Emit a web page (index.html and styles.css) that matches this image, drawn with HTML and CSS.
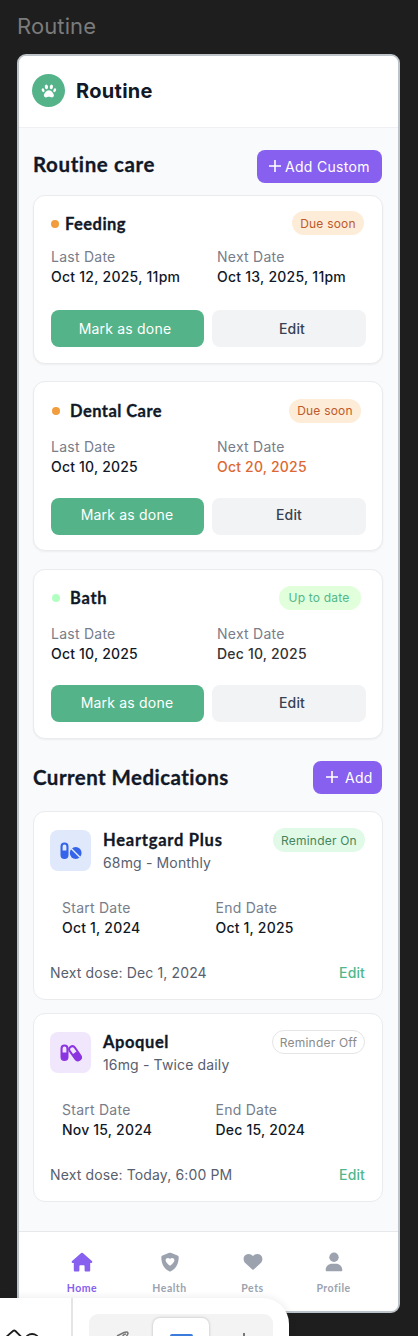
FILE: index.html
```html
<!DOCTYPE html>
<html lang="en">
<head>
<meta charset="utf-8">
<title>Routine</title>
<link rel="stylesheet" href="styles.css">
</head>
<body>
<div class="canvas">
  <div class="frame-name"><span>Routine</span></div>
  <main class="frame">
    <header class="topbar">
      <span class="logo">
        <svg width="16" height="14" viewBox="0 0 16 14" fill="#fff"><ellipse cx="5.4" cy="2.9" rx="1.6" ry="2.3" transform="rotate(-12 5.4 2.9)"/><ellipse cx="10.4" cy="2.9" rx="1.6" ry="2.3" transform="rotate(12 10.4 2.9)"/><ellipse cx="2.1" cy="6.3" rx="1.3" ry="2" transform="rotate(-25 2.1 6.3)"/><ellipse cx="13.7" cy="6.3" rx="1.3" ry="2" transform="rotate(25 13.7 6.3)"/><path d="M7.9 6.2C5.2 6.2 2.9 9.6 2.9 11.6c0 1.2.9 1.8 2 1.8 1.200 0 1.800-.6 3-.6s1.800.6 3 .6c1.100 0 2-.6 2-1.800 0-2-2.300-5.400-5-5.400Z"/></svg>
      </span>
      <h1>Routine</h1>
    </header>

    <div class="section-head care-head">
      <h2 class="t-care">Routine care</h2>
      <button class="add add-custom"><svg width="12" height="12" viewBox="0 0 12 12"><path d="M6 .5v11M.5 6h11" stroke="#fff" stroke-width="1.600" stroke-linecap="round"/></svg><span>Add Custom</span></button>
    </div>

    <section class="card feeding">
      <div class="card-head"><i class="dot"></i><h3>Feeding</h3><span class="pill soon">Due soon</span></div>
      <div class="dates"><dl><dt>Last Date</dt><dd>Oct 12, 2025, 11pm</dd></dl><dl><dt>Next Date</dt><dd>Oct 13, 2025, 11pm</dd></dl></div>
      <div class="actions"><button class="done">Mark as done</button><button class="edit">Edit</button></div>
    </section>

    <section class="card dental">
      <div class="card-head"><i class="dot"></i><h3>Dental Care</h3><span class="pill soon">Due soon</span></div>
      <div class="dates"><dl><dt>Last Date</dt><dd>Oct 10, 2025</dd></dl><dl><dt>Next Date</dt><dd class="due">Oct 20, 2025</dd></dl></div>
      <div class="actions"><button class="done">Mark as done</button><button class="edit">Edit</button></div>
    </section>

    <section class="card bath">
      <div class="card-head"><i class="dot ok"></i><h3>Bath</h3><span class="pill uptodate">Up to date</span></div>
      <div class="dates"><dl><dt>Last Date</dt><dd>Oct 10, 2025</dd></dl><dl><dt>Next Date</dt><dd class="later">Dec 10, 2025</dd></dl></div>
      <div class="actions"><button class="done">Mark as done</button><button class="edit">Edit</button></div>
    </section>

    <div class="section-head med-head">
      <h2 class="t-med">Current Medications</h2>
      <button class="add add-med"><svg width="12" height="12" viewBox="0 0 12 12"><path d="M6 .5v11M.5 6h11" stroke="#fff" stroke-width="1.600" stroke-linecap="round"/></svg><span>Add</span></button>
    </div>

    <section class="med">
      <div class="med-top">
        <span class="med-icon blue"><svg width="22" height="18" viewBox="0 0 22 18"><path fill="#3563e9" fill-rule="evenodd" d="M4.500 .6a4 4 0 0 1 4 4v8.400a4 4 0 0 1-8 0V4.600a4 4 0 0 1 4-4Zm0 2A1.900 1.900 0 0 0 2.600 4.600v4h3.800V4.600A1.900 1.900 0 0 0 4.500 2.600Z"/><circle cx="15.700" cy="11" r="5.900" fill="#3563e9"/><path d="M10.700 6l10 10" stroke="#dce8fb" stroke-width="1.500"/></svg></span>
        <div class="med-name"><h3 class="t-heart">Heartgard Plus</h3><p>68mg - Monthly</p></div>
        <span class="pill on">Reminder On</span>
      </div>
      <div class="dates"><dl><dt>Start Date</dt><dd>Oct 1, 2024</dd></dl><dl><dt>End Date</dt><dd>Oct 1, 2025</dd></dl></div>
      <div class="med-foot"><span>Next dose: Dec 1, 2024</span><a>Edit</a></div>
    </section>

    <section class="med">
      <div class="med-top">
        <span class="med-icon purple"><svg width="22" height="18" viewBox="0 0 22 18" fill="#8b35e0" fill-rule="evenodd"><path d="M4.500 .6a4 4 0 0 1 4 4v8.400a4 4 0 0 1-8 0V4.600a4 4 0 0 1 4-4Zm0 2A1.900 1.900 0 0 0 2.600 4.600v4h3.800V4.600A1.900 1.900 0 0 0 4.500 2.600Z"/><path transform="translate(15.100 9.300) rotate(-35)" d="M0-8.900a4.100 4.100 0 0 1 4.100 4.100V4.800a4.100 4.100 0 0 1-8.200 0V-4.800A4.100 4.100 0 0 1 0-8.900Zm0 2A2.100 2.100 0 0 0-2.100-4.800V-.6H2.100V-4.800A2.100 2.100 0 0 0 0-6.900Z"/></svg></span>
        <div class="med-name"><h3 class="t-apo">Apoquel</h3><p>16mg - Twice daily</p></div>
        <span class="pill off">Reminder Off</span>
      </div>
      <div class="dates"><dl><dt>Start Date</dt><dd>Nov 15, 2024</dd></dl><dl><dt>End Date</dt><dd>Dec 15, 2024</dd></dl></div>
      <div class="med-foot"><span>Next dose: Today, 6:00 PM</span><a>Edit</a></div>
    </section>

    <nav class="tabs">
      <a class="tab active"><svg width="22" height="20" viewBox="0 0 22 20"><path d="M10.200 1.100a1.200 1.200 0 0 1 1.600 0l9.100 8c.9.800.4 1.900-.7 1.900h-1v7.300c0 .8-.5 1.200-1.200 1.200h-3.300c-.7 0-1.100-.4-1.100-1.100v-4.100c0-.7-.4-1.100-1-1.100H9.500c-.7 0-1.100.4-1.100 1.100v4.100c0 .7-.4 1.100-1.100 1.100H4c-.7 0-1.200-.4-1.200-1.200V11h-1C.7 11 .2 9.900 1.100 9.100Z"/></svg><span>Home</span></a>
      <a class="tab health"><svg width="18" height="20" viewBox="0 0 18 20"><path fill-rule="evenodd" d="M8.300.8a1.700 1.700 0 0 1 1.400 0l6.800 2.700c.7.300 1.200.9 1.200 1.600 0 5.300-1.600 11.200-7.900 14.100a1.900 1.900 0 0 1-1.600 0C1.900 16.300.3 10.400.3 5.100c0-.7.500-1.300 1.200-1.600ZM9 7.100c-1.300-1.800-4.400-1.200-4.400 1.200 0 1.800 1.800 3.400 4 5.200.3.200.5.200.8 0 2.200-1.800 4-3.400 4-5.200 0-2.400-3.100-3-4.400-1.200Z"/></svg><span>Health</span></a>
      <a class="tab pets"><svg width="20" height="20" viewBox="0 0 20 20"><path d="M10 4C8.700 2.500 6.900 1.800 5.200 1.900 2.500 2 .6 4.200.6 6.900c0 1.700.7 3.200 1.900 4.300l6.800 6.300c.4.400 1 .4 1.400 0l6.800-6.300c1.200-1.100 1.900-2.600 1.900-4.300 0-2.700-1.900-4.900-4.600-5C13.100 1.800 11.300 2.500 10 4Z"/></svg><span>Pets</span></a>
      <a class="tab profile"><svg width="18" height="20" viewBox="0 0 18 20"><circle cx="9" cy="5.200" r="4.700"/><path d="M.7 18c0-3.700 2.800-6.300 6.500-6.300h3.600c3.700 0 6.500 2.600 6.500 6.300 0 .8-.4 1.300-1.200 1.300H1.900c-.8 0-1.200-.5-1.200-1.300Z"/></svg><span>Profile</span></a>
    </nav>
  </main>

  <aside class="toolbar">
    <div class="tool-left"><svg width="42" height="12" viewBox="0 0 42 12" fill="none" stroke="#1c1c1c" stroke-width="1.800"><path d="M5 10l8-7q1.200-1 2.400 0l7 7M25 12a7.200 7.200 0 0 1 14.200 0"/></svg></div>
    <div class="tool-right"><div class="tool-group">
      <span class="tool"><svg width="24" height="8" viewBox="0 0 24 8" fill="none" stroke="#777" stroke-width="1.500"><path d="M8 5l7-3.500q4-1.500 4 1l-3 5.500M13 7q1-4 4-4"/></svg></span>
      <span class="tool selected"><i></i></span>
      <span class="tool tick"><i></i></span>
    </div></div>
  </aside>
</div>
</body>
</html>
```
FILE: styles.css
```css
* { box-sizing: border-box; margin: 0; padding: 0; }
body { background: #1e1e1e; font-family: Inter, "Liberation Sans", sans-serif; color: #111827; }
button { border: 0; font: inherit; }
svg { display: block; flex: none; }
h2, h3 { font-family: Lato, "Open Sans", sans-serif; font-weight: 700; white-space: nowrap; }

.canvas { position: relative; width: 418px; height: 1336px; overflow: hidden; }
.frame-name { height: 54px; padding: 11px 0 0 17px; font-size: 22px; line-height: 30px; color: #7b7b7b; letter-spacing: .1px; }
.frame { display: flex; flex-direction: column; width: 383px; height: 1259px; margin-left: 17px; border: 2px solid #bcc4ca; border-radius: 9px; background: #f9fafc; overflow: hidden; }

.topbar { display: flex; align-items: center; flex: none; height: 72px; padding: 0 0 2px 13px; background: #fff; border-bottom: 1px solid #eff0f3; }
.logo { display: grid; place-items: center; width: 33px; height: 33px; border-radius: 50%; background: #54b388; }
h1 { margin-left: 11px; font-size: 20px; line-height: 28px; font-weight: 700; letter-spacing: .3px; }

.section-head { display: flex; justify-content: space-between; flex: none; height: 33px; padding: 0 16px 0 14px; }
.care-head { margin-top: 22px; }
.med-head { margin-top: 22px; }
h2 { font-size: 20.500px; line-height: 26px; letter-spacing: .5px; -webkit-text-stroke: .3px currentColor; }
.t-care { margin-top: 1px; letter-spacing: .6px; }
.t-med { margin-top: 3px; letter-spacing: .45px; }
.add { display: flex; align-items: center; height: 33px; border-radius: 8px; background: #8860ef; color: #fff; font-size: 14px; letter-spacing: .3px; white-space: nowrap; }
.add-custom { width: 125px; padding: 0 0 1px 12px; gap: 4px; }
.add-med { width: 69px; padding: 0 0 1px 13px; gap: 7px; }

.card { flex: none; width: 350px; height: 169px; margin: 0 0 0 14px; padding: 0 17px; border: 1px solid #eaebed; border-radius: 12px; background: #fff; box-shadow: 0 1px 2px #0000000d; }
.feeding { margin-top: 12px; padding-top: 15px; }
.dental { margin-top: 17px; height: 170px; padding-top: 16px; }
.bath { margin-top: 18px; height: 170px; padding-top: 16px; }
.card-head { display: flex; align-items: center; height: 25px; }
.dot { width: 8px; height: 8px; border-radius: 50%; background: #f29d3d; }
.ok { background: #b2ffc2; }
h3 { font-size: 16.500px; line-height: 24px; letter-spacing: .45px; -webkit-text-stroke: .3px currentColor; }
.card h3 { margin: 1px 0 0 6px; }
.dental .card-head, .bath .card-head { padding: 0 4px 0 1px; }
.dental h3, .bath h3 { margin: 0 0 0 10px; }
.bath .card-head { margin-top: -1px; }
.bath h3 { letter-spacing: .7px; }
.t-heart { letter-spacing: .75px; }
.t-apo { letter-spacing: .6px; }
.pill { display: grid; place-items: center; height: 24px; margin-left: auto; border-radius: 12px; font-size: 12px; letter-spacing: .2px; white-space: nowrap; }
.soon { width: 72px; background: #fdecd7; color: #bd5a2c; }
.feeding .soon { margin: -1px 1px 0 auto; }
.uptodate { width: 82px; padding-right: 2px; background: #e0ffda; color: #50b78c; }

.dates { display: grid; grid-template-columns: 166px 1fr; font-size: 14px; line-height: 20px; white-space: nowrap; }
.feeding .dates { margin-top: 11px; }
.dental .dates, .bath .dates { margin-top: 14px; }
dt { color: #777d8a; letter-spacing: .25px; }
dd { color: #111827; font-weight: 500; letter-spacing: .2px; }
.feeding dd { letter-spacing: .25px; }
.due { color: #dc6833; }
.later { color: #333; }
.actions { display: grid; grid-template-columns: 153px 154px; gap: 8px; }
.feeding .actions { margin-top: 23px; }
.dental .actions, .bath .actions { margin-top: 21px; }
.actions button { height: 37px; border-radius: 8px; font-size: 14px; letter-spacing: .2px; }
.actions .done { background: #54b388; color: #fff; padding-right: 5px; }
.actions .edit { background: #f2f3f5; color: #374151; padding-left: 6px; font-weight: 500; }
.dental .actions button { padding-bottom: 4px; }
.bath .actions button { padding-bottom: 2px; }
.dental .actions .done, .bath .actions .done { padding-right: 1px; }
.dental .actions .edit { padding-left: 0; }

.med { flex: none; width: 350px; height: 189px; margin: 17px 0 0 14px; padding: 16px 17px 16px 16px; border: 1px solid #eaebed; border-radius: 12px; background: #fff; }
.med + .med { margin-top: 13px; }
.med-top { display: flex; height: 42px; }
.med-icon { display: grid; place-items: center; width: 41px; height: 41px; margin-top: 2px; border-radius: 8px; }
.blue { background: #dfe9fb; }
.purple { background: #f1e7fd; }
.med-name { margin-left: 12px; }
.med-name p { margin-top: 1px; font-size: 14px; line-height: 20px; color: #58606e; letter-spacing: .15px; }
.on { width: 92px; background: #e0fae7; color: #46855c; }
.off { width: 93px; border: 1px solid #e5e5e5; color: #8a8a8a; }
.med .dates { margin: 28px 0 0 12px; grid-template-columns: 153.500px 1fr; }
.med-foot { display: flex; justify-content: space-between; margin-top: 25px; font-size: 14px; line-height: 20px; color: #58606e; letter-spacing: .13px; }
.med-foot a { color: #50b78c; font-weight: 500; }

.tabs { display: grid; grid-template-columns: 88px 87px 79px 83px; flex: 1; margin-top: 29px; padding: 20px 0 0 19px; border-top: 1px solid #e6e8ea; background: #fff; }
.tab { display: flex; flex-direction: column; align-items: center; gap: 9px; fill: #9ca3af; color: #9ca3af; font: 700 10.500px/14px Lato, "Open Sans", sans-serif; letter-spacing: .5px; }
.active { fill: #8860ef; color: #8860ef; }

.toolbar { position: absolute; left: 0; top: 1298px; display: flex; width: 289px; height: 60px; border-radius: 0 26px 0 0; background: #fff; box-shadow: 0 0 8px #00000018; }
.tool-left { width: 73px; padding-top: 30px; border-right: 2px solid #e5e5e5; }
.tool-right { padding: 16px; }
.tool-group { display: grid; grid-template-columns: 64px 56px 64px; width: 184px; height: 44px; border-radius: 9px; background: #f3f3f3; }
.tool { padding: 17px 0 0 20px; }
.selected { display: flex; justify-content: center; margin-top: 4px; padding: 16px 0 0; border-radius: 7px; background: #fff; box-shadow: 0 0 3px #00000040; }
.selected i { width: 23px; height: 10px; border-radius: 2px; background: #3b7bdc; }
.tick { padding-left: 34px; }
.tick i { display: block; width: 2px; height: 6px; margin-top: 2px; background: #777; }
```
